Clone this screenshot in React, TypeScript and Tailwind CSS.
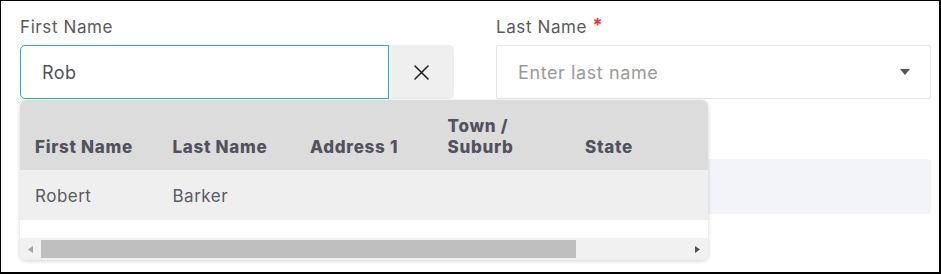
const COLUMNS = [
  { key: 'first', label: 'First Name' },
  { key: 'last', label: 'Last Name' },
  { key: 'addr', label: 'Address 1' },
  { key: 'town', label: 'Town /\nSuburb' },
  { key: 'state', label: 'State' },
];

const ROWS = [{ first: 'Robert', last: 'Barker', addr: '', town: '', state: '' }];

function ResultsDropdown() {
  return (
    <div className="absolute left-0 top-full mt-px z-10 w-[688px] bg-white rounded-md shadow-[0_1px_4px_rgba(0,0,0,0.18)] overflow-hidden">
      <div className="overflow-hidden">
        <div className="w-[825px]">
          {/* header */}
          <div className="grid grid-cols-[repeat(6,137.5px)] h-[70px] bg-[#dddcdc]">
            {COLUMNS.map(c => (
              <div key={c.key} className="flex items-end pl-[15px] pb-[12px]">
                <span className="whitespace-pre text-[17px] leading-[21px] font-extrabold tracking-[0.7px] text-[#52525e]">{c.label}</span>
              </div>
            ))}
            <div />
          </div>
          {/* rows */}
          {ROWS.map((r, i) => (
            <div key={i} className="grid grid-cols-[repeat(6,137.5px)] h-[50px] bg-[#efefef]">
              {COLUMNS.map(c => (
                <div key={c.key} className="flex items-center pl-[15px] pt-[4px] text-[17px] tracking-[0.5px] text-[#5a5a66]">
                  {r[c.key as keyof typeof r]}
                </div>
              ))}
              <div />
            </div>
          ))}
        </div>
      </div>
      <div className="h-[18px]" />
      {/* horizontal scrollbar */}
      <div className="flex items-center h-[22px] bg-[#f1f1f1]">
        <div className="w-[21px] h-full flex items-center justify-center">
          <svg width="5" height="7" viewBox="0 0 5 7"><path d="M5 0 L0 3.5 L5 7 Z" fill="#a3a3a3" /></svg>
        </div>
        <div className="flex-1 h-full py-[2px] pr-[4px]">
          <div className="h-full w-[535px] bg-[#bfbfbf]" />
        </div>
        <div className="w-[21px] h-full flex items-center justify-center">
          <svg width="5" height="7" viewBox="0 0 5 7"><path d="M0 0 L5 3.5 L0 7 Z" fill="#505050" /></svg>
        </div>
      </div>
    </div>
  );
}

export default function App() {
  return (
    <div className="w-[941px] h-[274px] bg-white border-l border-t border-r-2 border-b-2 border-black pl-[19px] pr-[8px] pt-[14px] font-['Inter',sans-serif] overflow-hidden">
      <div className="grid grid-cols-[435px_435px] gap-x-[41px]">
        <div>
          <label className="block text-[17px] leading-6 tracking-[0.6px] text-[#5a5a5a]">First Name</label>
          <div className="relative mt-[6px] flex h-[54px] w-[434px]">
            <div className="flex-1 flex items-center pl-[21px] border border-[#1fb5ad] rounded-l-[5px] text-[18px] tracking-[0.5px] text-[#52525e]">
              Rob
            </div>
            <button className="w-[65px] flex items-center justify-center bg-[#efefef] rounded-r-[5px]">
              <svg width="15" height="15" viewBox="0 0 15 15">
                <path d="M1 1 L14 14 M14 1 L1 14" stroke="#1a1a1a" strokeWidth="1.5" strokeLinecap="round" />
              </svg>
            </button>
            <ResultsDropdown />
          </div>
        </div>
        <div>
          <label className="block text-[17px] leading-6 tracking-[0.6px] text-[#5a5a5a]">
            Last Name <span className="font-bold text-[#f0303f] text-[18px] align-top leading-5">*</span>
          </label>
          <div className="mt-[6px] flex items-center justify-between h-[54px] pl-[21px] pr-[20px] border border-[#e6e6e6] rounded-[2px]">
            <span className="text-[18px] tracking-[0.6px] text-[#9a9a9a]">Enter last name</span>
            <svg width="10" height="6" viewBox="0 0 10 6"><path d="M0 0 L10 0 L5 6 Z" fill="#555555" /></svg>
          </div>
        </div>
      </div>
      <div className="grid grid-cols-[435px_435px] gap-x-[41px] mt-[60px]">
        <div className="h-[55px] rounded bg-[#f3f4f7]" />
        <div className="h-[55px] rounded bg-[#f3f4f7]" />
      </div>
    </div>
  );
}
